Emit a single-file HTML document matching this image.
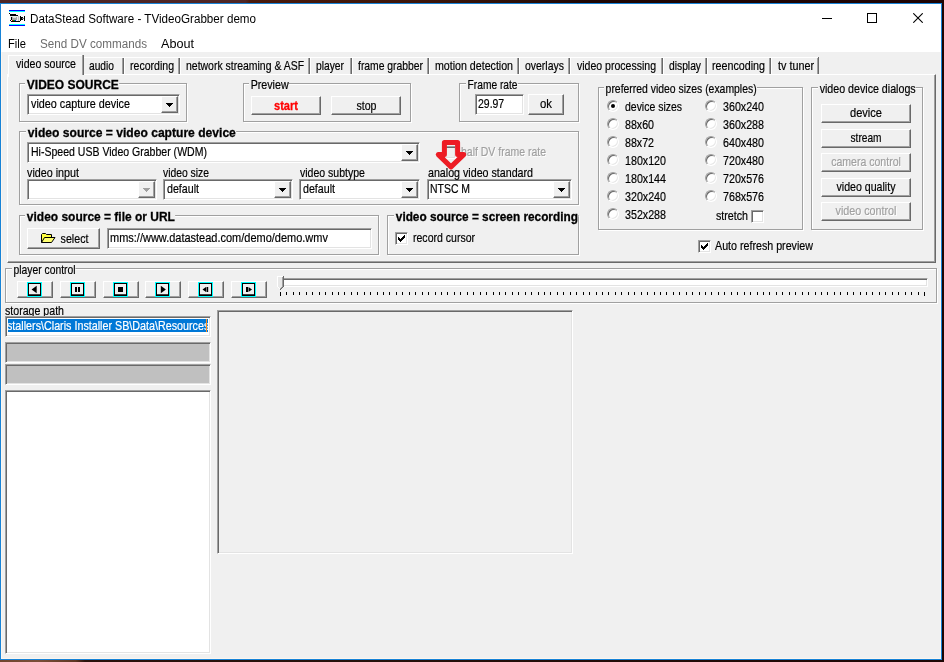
<!DOCTYPE html>
<html>
<head>
<meta charset="utf-8">
<title>DataStead Software - TVideoGrabber demo</title>
<style>
html,body{margin:0;padding:0;}
body{will-change:transform;width:944px;height:662px;position:relative;overflow:hidden;background:#1e0402;font-family:"Liberation Sans",sans-serif;font-size:13px;color:#000;-webkit-text-stroke:0.2px currentColor;}
.a{position:absolute;}
.t{position:absolute;white-space:nowrap;line-height:16px;height:16px;transform-origin:0 0;}
.b{font-weight:bold;-webkit-text-stroke:0.3px currentColor;}
.dis{color:#a0a0a0;text-shadow:1px 1px 0 #fff;}
#win{left:0;top:3px;width:940px;height:655px;border:1px solid #1883d7;background:#f0f0f0;box-shadow:inset 1px 0 #fcf6ef,inset -1px 0 #fcf6ef,inset 0 -1px #fcf6ef;}
#cap{left:1px;top:4px;width:940px;height:48px;background:#fff;}
.seg{font-size:12px;line-height:16px;-webkit-text-stroke:0;}
/* classic 3d borders */
.sunk{position:absolute;box-sizing:border-box;border:1px solid;border-color:#a0a0a0 #fff #fff #a0a0a0;box-shadow:inset 1px 1px 0 #696969,inset -1px -1px 0 #e3e3e3;background:#fff;}
.btn{position:absolute;box-sizing:border-box;border:1px solid;border-color:#fff #696969 #696969 #fff;box-shadow:inset -1px -1px 0 #a0a0a0;background:#f0f0f0;text-align:center;white-space:nowrap;}
.btn span{position:absolute;left:0;right:0;line-height:16px;transform-origin:50% 0;}
.grp{position:absolute;box-sizing:border-box;border:1px solid #a0a0a0;box-shadow:1px 1px 0 #fff,inset 1px 1px 0 #fff;}
.gl{position:absolute;white-space:nowrap;line-height:16px;height:16px;padding:0 0 0 2px;transform-origin:0 0;background:linear-gradient(to bottom,transparent 6px,#f0f0f0 6px,#f0f0f0 8px,transparent 8px);}
.dd{position:absolute;box-sizing:border-box;width:16px;height:15px;border:1px solid;border-color:#fff #696969 #696969 #fff;box-shadow:inset -1px -1px 0 #a0a0a0;background:#f0f0f0;}
.dd i{position:absolute;left:3px;top:5px;width:0;height:0;border-left:4px solid transparent;border-right:4px solid transparent;border-top:4px solid #000;}
.dd.off i{border-top-color:#a0a0a0;}
.rad{position:absolute;box-sizing:border-box;width:12px;height:12px;border-radius:50%;border:1px solid;border-color:#a0a0a0 #fff #fff #a0a0a0;background:#fff;box-shadow:inset 1px 1px 0 #696969,inset -1px -1px 0 #e8e8e8;}
.chk{position:absolute;box-sizing:border-box;width:13px;height:13px;border:1px solid;border-color:#a0a0a0 #fff #fff #a0a0a0;box-shadow:inset 1px 1px 0 #696969,inset -1px -1px 0 #e3e3e3;background:#fff;}
.tabr{position:absolute;top:57px;width:2px;height:17px;background:linear-gradient(90deg,#a0a0a0 0,#a0a0a0 1px,#696969 1px,#696969 2px);}
.pic{position:absolute;box-sizing:border-box;width:14px;height:14px;border:1px solid #00ffff;box-shadow:inset 0 0 0 1px #000;background:#f0f0f0;}
</style>
</head>
<body>
<!-- desktop strips -->
<div class="a" style="left:0;top:0;width:944px;height:3px;background:linear-gradient(90deg,#4f2725 0,#4f2625 26%,#491a0c 26.5%,#3c1509 45%,#2a0e07 56%,#1e0503 62%,#1e0302 100%);"></div>
<div class="a" style="left:0;top:660px;width:944px;height:2px;background:linear-gradient(90deg,#70452f 0,#7a4e38 4%,#5e3724 8%,#2a120c 9%,#24100a 40%,#1e0604 100%);"></div>

<div id="win" class="a"></div>
<div id="cap" class="a"></div>

<!-- title icon -->
<svg class="a" style="left:9px;top:10px;" width="16" height="16" viewBox="0 0 16 16" shape-rendering="crispEdges">
<rect x="0" y="0" width="16" height="1" fill="#0000ff"/><rect x="0" y="1" width="16" height="1" fill="#00ffff"/>
<rect x="0" y="14" width="16" height="1" fill="#00ffff"/><rect x="0" y="15" width="16" height="1" fill="#0000ff"/>
<rect x="0" y="3" width="1" height="1" fill="#000"/><rect x="1" y="4" width="6" height="1" fill="#000"/><rect x="1" y="5" width="8" height="1" fill="#000"/>
<rect x="1" y="6" width="10" height="5" fill="#ececec"/><rect x="3" y="7" width="5" height="3" fill="#a8a8a8"/><rect x="4" y="7" width="3" height="1" fill="#e0e0e0"/>
<rect x="2" y="7" width="1" height="3" fill="#000"/><rect x="9" y="6" width="1" height="5" fill="#c0c0c0"/>
<rect x="1" y="10" width="1" height="1" fill="#000"/><rect x="2" y="10" width="1" height="1" fill="#fff"/><rect x="3" y="10" width="1" height="1" fill="#c00000"/><rect x="4" y="10" width="2" height="1" fill="#00a000"/><rect x="6" y="10" width="1" height="1" fill="#0000ff"/>
<rect x="2" y="11" width="9" height="1" fill="#000"/>
<rect x="11" y="6" width="1" height="5" fill="#000"/><rect x="12" y="7" width="1" height="3" fill="#000"/><rect x="13" y="8" width="2" height="1" fill="#808080"/><rect x="13" y="7" width="1" height="1" fill="#000"/><rect x="13" y="9" width="1" height="1" fill="#000"/>
<rect x="15" y="6" width="1" height="5" fill="#000"/>
</svg>
<!-- caption buttons -->
<div class="a" style="left:822px;top:18px;width:10px;height:1px;background:#000;"></div>
<div class="a" style="left:867px;top:13px;width:8px;height:8px;border:1px solid #000;"></div>
<svg class="a" style="left:913px;top:13px;" width="10" height="10" viewBox="0 0 10 10"><path d="M0.3 0.3 L9.7 9.7 M9.7 0.3 L0.3 9.7" stroke="#000" stroke-width="1.1" fill="none"/></svg>
<div class="t seg" id="title" style="left:30px;top:11px;transform:scaleX(0.97);">DataStead Software - TVideoGrabber demo</div>
<div class="t seg" id="m1" style="left:8px;top:36px;transform:scaleX(0.931);">File</div>
<div class="t seg" id="m2" style="left:40px;top:36px;transform:scaleX(0.972);color:#6d6d6d;">Send DV commands</div>
<div class="t seg" id="m3" style="left:161px;top:36px;transform:scaleX(1.052);">About</div>
<!-- tab control -->
<div class="a" style="left:7px;top:74px;width:927px;height:187px;border:1px solid;border-color:#fff #696969 #696969 #fff;box-shadow:inset -1px -1px 0 #a0a0a0;"></div>
<div class="a" style="left:8px;top:55px;width:74px;height:21px;background:#f0f0f0;border-top:1px solid #fff;border-left:1px solid #fff;"></div>
<div class="tabr" style="left:82px;top:55px;height:20px;"></div>
<div class="tabr" style="left:122px;"></div>
<div class="a" style="left:124px;top:58px;width:1px;height:16px;background:#fff;"></div>
<div class="tabr" style="left:178px;"></div>
<div class="a" style="left:180px;top:58px;width:1px;height:16px;background:#fff;"></div>
<div class="tabr" style="left:308px;"></div>
<div class="a" style="left:310px;top:58px;width:1px;height:16px;background:#fff;"></div>
<div class="tabr" style="left:350px;"></div>
<div class="a" style="left:352px;top:58px;width:1px;height:16px;background:#fff;"></div>
<div class="tabr" style="left:427px;"></div>
<div class="a" style="left:429px;top:58px;width:1px;height:16px;background:#fff;"></div>
<div class="tabr" style="left:517px;"></div>
<div class="a" style="left:519px;top:58px;width:1px;height:16px;background:#fff;"></div>
<div class="tabr" style="left:568px;"></div>
<div class="a" style="left:570px;top:58px;width:1px;height:16px;background:#fff;"></div>
<div class="tabr" style="left:661px;"></div>
<div class="a" style="left:663px;top:58px;width:1px;height:16px;background:#fff;"></div>
<div class="tabr" style="left:705px;"></div>
<div class="a" style="left:707px;top:58px;width:1px;height:16px;background:#fff;"></div>
<div class="tabr" style="left:769px;"></div>
<div class="a" style="left:771px;top:58px;width:1px;height:16px;background:#fff;"></div>
<div class="tabr" style="left:817px;"></div>
<div class="a" style="left:84px;top:57px;width:734px;height:1px;background:#fff;"></div>
<div class="t " id="tab0" style="left:16px;top:56px;transform:scaleX(0.814);">video source</div>
<div class="t " id="tab1" style="left:89px;top:58px;transform:scaleX(0.786);">audio</div>
<div class="t " id="tab2" style="left:130px;top:58px;transform:scaleX(0.812);">recording</div>
<div class="t " id="tab3" style="left:186px;top:58px;transform:scaleX(0.805);">network streaming &amp; ASF</div>
<div class="t " id="tab4" style="left:316px;top:58px;transform:scaleX(0.79);">player</div>
<div class="t " id="tab5" style="left:358px;top:58px;transform:scaleX(0.796);">frame grabber</div>
<div class="t " id="tab6" style="left:435px;top:58px;transform:scaleX(0.818);">motion detection</div>
<div class="t " id="tab7" style="left:525px;top:58px;transform:scaleX(0.805);">overlays</div>
<div class="t " id="tab8" style="left:577px;top:58px;transform:scaleX(0.81);">video processing</div>
<div class="t " id="tab9" style="left:668.5px;top:58px;transform:scaleX(0.791);">display</div>
<div class="t " id="tab10" style="left:712px;top:58px;transform:scaleX(0.824);">reencoding</div>
<div class="t " id="tab11" style="left:777.5px;top:58px;transform:scaleX(0.83);">tv tuner</div>
<!-- groups -->
<div class="grp" style="left:19px;top:83px;width:168px;height:39px;"></div>
<div class="gl b" style="left:25px;top:77px;transform:scaleX(0.923);"><span id="g1">VIDEO SOURCE</span></div>
<div class="grp" style="left:243px;top:83px;width:168px;height:39px;"></div>
<div class="gl" style="left:249px;top:77px;transform:scaleX(0.822);"><span id="g2">Preview</span></div>
<div class="grp" style="left:459px;top:83px;width:120px;height:39px;"></div>
<div class="gl" style="left:466px;top:77px;transform:scaleX(0.786);"><span id="g3">Frame rate</span></div>
<div class="grp" style="left:19px;top:131px;width:560px;height:74px;"></div>
<div class="gl b" style="left:26px;top:125px;transform:scaleX(0.93);"><span id="g4">video source = video capture device</span></div>
<div class="grp" style="left:19px;top:215px;width:360px;height:40px;"></div>
<div class="gl b" style="left:25px;top:209px;transform:scaleX(0.921);"><span id="g5">video source = file or URL</span></div>
<div class="grp" style="left:387px;top:215px;width:192px;height:40px;"></div>
<div class="gl b" style="left:394px;top:209px;transform:scaleX(0.908);"><span id="g6">video source = screen recording</span></div>
<div class="grp" style="left:598px;top:87px;width:205px;height:143px;"></div>
<div class="gl" style="left:604px;top:81px;transform:scaleX(0.801);"><span id="g7">preferred video sizes (examples)</span></div>
<div class="grp" style="left:811px;top:87px;width:112px;height:143px;"></div>
<div class="gl" style="left:818px;top:81px;transform:scaleX(0.82);"><span id="g8">video device dialogs</span></div>
<div class="grp" style="left:5px;top:268px;width:932px;height:35px;"></div>
<div class="gl" style="left:12px;top:262px;transform:scaleX(0.794);"><span id="g9">player control</span></div>
<!-- combos / edits -->
<div class="sunk" style="left:27px;top:94px;width:153px;height:21px;"><div class="dd" style="right:1px;top:1px;width:17px;height:17px;"><svg class="a" style="left:4px;top:6px;" width="7" height="4" viewBox="0 0 7 4" shape-rendering="crispEdges"><path d="M0 0h7v1h-1v1h-1v1h-1v1h-1v-1h-1v-1h-1v-1h-1z" fill="#000"/></svg></div></div>
<div class="t " id="c1" style="left:31px;top:96px;transform:scaleX(0.83);">video capture device</div>
<div class="sunk" style="left:27px;top:142px;width:393px;height:21px;"><div class="dd" style="right:1px;top:1px;width:17px;height:17px;"><svg class="a" style="left:4px;top:6px;" width="7" height="4" viewBox="0 0 7 4" shape-rendering="crispEdges"><path d="M0 0h7v1h-1v1h-1v1h-1v1h-1v-1h-1v-1h-1v-1h-1z" fill="#000"/></svg></div></div>
<div class="t " id="c2" style="left:31px;top:144px;transform:scaleX(0.81);">Hi-Speed USB Video Grabber (WDM)</div>
<div class="sunk" style="left:27px;top:179px;width:130px;height:21px;"><div class="dd" style="right:1px;top:1px;width:17px;height:17px;"><svg class="a" style="left:4px;top:6px;" width="7" height="4" viewBox="0 0 7 4" shape-rendering="crispEdges"><path d="M0 0h7v1h-1v1h-1v1h-1v1h-1v-1h-1v-1h-1v-1h-1z" fill="#a0a0a0"/></svg></div></div>
<div class="sunk" style="left:163px;top:179px;width:130px;height:21px;"><div class="dd" style="right:1px;top:1px;width:17px;height:17px;"><svg class="a" style="left:4px;top:6px;" width="7" height="4" viewBox="0 0 7 4" shape-rendering="crispEdges"><path d="M0 0h7v1h-1v1h-1v1h-1v1h-1v-1h-1v-1h-1v-1h-1z" fill="#000"/></svg></div></div>
<div class="t " id="c3" style="left:167px;top:181px;transform:scaleX(0.82);">default</div>
<div class="sunk" style="left:299px;top:179px;width:121px;height:21px;"><div class="dd" style="right:1px;top:1px;width:17px;height:17px;"><svg class="a" style="left:4px;top:6px;" width="7" height="4" viewBox="0 0 7 4" shape-rendering="crispEdges"><path d="M0 0h7v1h-1v1h-1v1h-1v1h-1v-1h-1v-1h-1v-1h-1z" fill="#000"/></svg></div></div>
<div class="t " id="c4" style="left:303px;top:181px;transform:scaleX(0.82);">default</div>
<div class="sunk" style="left:427px;top:179px;width:145px;height:21px;"><div class="dd" style="right:1px;top:1px;width:17px;height:17px;"><svg class="a" style="left:4px;top:6px;" width="7" height="4" viewBox="0 0 7 4" shape-rendering="crispEdges"><path d="M0 0h7v1h-1v1h-1v1h-1v1h-1v-1h-1v-1h-1v-1h-1z" fill="#000"/></svg></div></div>
<div class="t " id="c5" style="left:430px;top:181px;transform:scaleX(0.803);">NTSC M</div>
<div class="t " id="l1" style="left:27px;top:165px;transform:scaleX(0.827);">video input</div>
<div class="t " id="l2" style="left:163px;top:165px;transform:scaleX(0.796);">video size</div>
<div class="t " id="l3" style="left:300px;top:165px;transform:scaleX(0.81);">video subtype</div>
<div class="t " id="l4" style="left:428px;top:165px;transform:scaleX(0.821);">analog video standard</div>
<div class="sunk" style="left:475px;top:94px;width:49px;height:21px;"></div>
<div class="t " id="e1" style="left:478px;top:96px;transform:scaleX(0.805);">29.97</div>
<div class="sunk" style="left:107px;top:228px;width:265px;height:21px;"></div>
<div class="t " id="e2" style="left:110px;top:230px;transform:scaleX(0.845);">mms://www.datastead.com/demo/demo.wmv</div>
<!-- buttons -->
<div class="btn" style="left:251px;top:96px;width:70px;height:19px;"><span class="b" id="b1" style="top:1px;left:0px;transform:scaleX(0.851);color:#ff0000;">start</span></div>
<div class="btn" style="left:331px;top:96px;width:70px;height:19px;"><span class="" id="b2" style="top:1px;left:1px;transform:scaleX(0.814);">stop</span></div>
<div class="btn" style="left:528px;top:94px;width:36px;height:21px;"><span class="" id="b3" style="top:1px;left:0px;transform:scaleX(0.874);">ok</span></div>
<div class="btn" style="left:27px;top:228px;width:73px;height:21px;"><span class="" id="b4" style="top:2px;left:22px;transform:scaleX(0.82);">select</span></div>
<svg class="a" style="left:41px;top:233px;" width="15" height="10" viewBox="0 0 15 10"><path d="M0.5 9.5V1.5L1.5 0.5H4.5L5.5 1.5H10.5V4.5" fill="#ffff40" stroke="#000"/><path d="M0.5 9.5L3.5 4.5H14L10.5 9.5Z" fill="#ffff70" stroke="#000" stroke-linejoin="round"/></svg>
<div class="btn" style="left:821px;top:104px;width:90px;height:19px;"><span class="" id="b5" style="top:0px;left:0px;transform:scaleX(0.852);">device</span></div>
<div class="btn" style="left:821px;top:129px;width:90px;height:19px;"><span class="" id="b6" style="top:0px;left:0px;transform:scaleX(0.78);">stream</span></div>
<div class="btn" style="left:821px;top:153px;width:90px;height:19px;"><span class="dis" id="b7" style="top:0px;left:0px;transform:scaleX(0.811);">camera control</span></div>
<div class="btn" style="left:821px;top:178px;width:90px;height:19px;"><span class="" id="b8" style="top:0px;left:0px;transform:scaleX(0.816);">video quality</span></div>
<div class="btn" style="left:821px;top:202px;width:90px;height:19px;"><span class="dis" id="b9" style="top:0px;left:0px;transform:scaleX(0.827);">video control</span></div>
<!-- radios -->
<div class="rad" style="left:607px;top:100px;"><i class="a" style="left:3px;top:3px;width:4px;height:4px;background:#000;border-radius:50%;"></i></div>
<div class="t " id="r0" style="left:624.5px;top:99px;transform:scaleX(0.805);">device sizes</div>
<div class="rad" style="left:607px;top:118px;"></div>
<div class="t " id="r1" style="left:624.5px;top:117px;transform:scaleX(0.819);">88x60</div>
<div class="rad" style="left:607px;top:136px;"></div>
<div class="t " id="r2" style="left:624.5px;top:135px;transform:scaleX(0.819);">88x72</div>
<div class="rad" style="left:607px;top:154px;"></div>
<div class="t " id="r3" style="left:624.5px;top:153px;transform:scaleX(0.822);">180x120</div>
<div class="rad" style="left:607px;top:172px;"></div>
<div class="t " id="r4" style="left:624.5px;top:171px;transform:scaleX(0.822);">180x144</div>
<div class="rad" style="left:607px;top:190px;"></div>
<div class="t " id="r5" style="left:624.5px;top:189px;transform:scaleX(0.822);">320x240</div>
<div class="rad" style="left:607px;top:208px;"></div>
<div class="t " id="r6" style="left:624.5px;top:207px;transform:scaleX(0.822);">352x288</div>
<div class="rad" style="left:705px;top:100px;"></div>
<div class="t " id="q0" style="left:722.6px;top:99px;transform:scaleX(0.822);">360x240</div>
<div class="rad" style="left:705px;top:118px;"></div>
<div class="t " id="q1" style="left:722.6px;top:117px;transform:scaleX(0.822);">360x288</div>
<div class="rad" style="left:705px;top:136px;"></div>
<div class="t " id="q2" style="left:722.6px;top:135px;transform:scaleX(0.822);">640x480</div>
<div class="rad" style="left:705px;top:154px;"></div>
<div class="t " id="q3" style="left:722.6px;top:153px;transform:scaleX(0.822);">720x480</div>
<div class="rad" style="left:705px;top:172px;"></div>
<div class="t " id="q4" style="left:722.6px;top:171px;transform:scaleX(0.822);">720x576</div>
<div class="rad" style="left:705px;top:190px;"></div>
<div class="t " id="q5" style="left:722.6px;top:189px;transform:scaleX(0.822);">768x576</div>
<div class="t " id="st" style="left:715.6px;top:208px;transform:scaleX(0.82);">stretch</div>
<div class="chk" style="left:751px;top:210px;"></div>
<div class="chk" style="left:395px;top:232px;"><svg class="a" style="left:2px;top:2px;" width="7" height="7" viewBox="0 0 7 7" shape-rendering="crispEdges"><path d="M0 2h1v3h-1zM1 3h1v3h-1zM2 4h1v3h-1zM3 3h1v3h-1zM4 2h1v3h-1zM5 1h1v3h-1zM6 0h1v3h-1z" fill="#000"/></svg></div>
<div class="t " id="k1" style="left:413px;top:230px;transform:scaleX(0.81);">record cursor</div>
<div class="chk" style="left:698px;top:240px;"><svg class="a" style="left:2px;top:2px;" width="7" height="7" viewBox="0 0 7 7" shape-rendering="crispEdges"><path d="M0 2h1v3h-1zM1 3h1v3h-1zM2 4h1v3h-1zM3 3h1v3h-1zM4 2h1v3h-1zM5 1h1v3h-1zM6 0h1v3h-1z" fill="#000"/></svg></div>
<div class="t " id="k2" style="left:715px;top:238px;transform:scaleX(0.822);">Auto refresh preview</div>
<div class="chk" style="left:443px;top:146px;background:#f0f0f0;"></div>
<div class="t dis" id="hd" style="left:461px;top:144px;transform:scaleX(0.806);">half DV frame rate</div>
<svg class="a" style="left:430px;top:136px;" width="42" height="36" viewBox="0 0 42 36"><path d="M14.4 6.4 H27.6 V18.6 H33.7 L21 30.9 L8.3 18.6 H14.4 Z" fill="none" stroke="#ed1c24" stroke-width="5" stroke-linejoin="round"/></svg>
<!-- player -->
<div class="btn" style="left:17px;top:281px;width:36px;height:17px;"><svg class="a" style="left:9px;top:0px;" width="15" height="15" viewBox="0 0 15 15"><rect x="0.5" y="0.5" width="14" height="14" fill="#f0f0f0" stroke="#00ffff" shape-rendering="crispEdges"/><rect x="1.5" y="1.5" width="12" height="12" fill="none" stroke="#000" shape-rendering="crispEdges"/><rect x="2" y="12" width="11" height="1" fill="#404040" shape-rendering="crispEdges"/><path d="M9.7 3.7v7.6L4.6 7.5z"/></svg></div>
<div class="btn" style="left:60px;top:281px;width:36px;height:17px;"><svg class="a" style="left:9px;top:0px;" width="15" height="15" viewBox="0 0 15 15"><rect x="0.5" y="0.5" width="14" height="14" fill="#f0f0f0" stroke="#00ffff" shape-rendering="crispEdges"/><rect x="1.5" y="1.5" width="12" height="12" fill="none" stroke="#000" shape-rendering="crispEdges"/><rect x="2" y="12" width="11" height="1" fill="#404040" shape-rendering="crispEdges"/><path d="M5 5h2v5H5zM8 5h2v5H8z"/></svg></div>
<div class="btn" style="left:103px;top:281px;width:36px;height:17px;"><svg class="a" style="left:9px;top:0px;" width="15" height="15" viewBox="0 0 15 15"><rect x="0.5" y="0.5" width="14" height="14" fill="#f0f0f0" stroke="#00ffff" shape-rendering="crispEdges"/><rect x="1.5" y="1.5" width="12" height="12" fill="none" stroke="#000" shape-rendering="crispEdges"/><rect x="2" y="12" width="11" height="1" fill="#404040" shape-rendering="crispEdges"/><path d="M5 5h5v5H5z"/></svg></div>
<div class="btn" style="left:145px;top:281px;width:36px;height:17px;"><svg class="a" style="left:9px;top:0px;" width="15" height="15" viewBox="0 0 15 15"><rect x="0.5" y="0.5" width="14" height="14" fill="#f0f0f0" stroke="#00ffff" shape-rendering="crispEdges"/><rect x="1.5" y="1.5" width="12" height="12" fill="none" stroke="#000" shape-rendering="crispEdges"/><rect x="2" y="12" width="11" height="1" fill="#404040" shape-rendering="crispEdges"/><path d="M5.8 3.7v7.6l5.1-3.8z"/></svg></div>
<div class="btn" style="left:188px;top:281px;width:36px;height:17px;"><svg class="a" style="left:9px;top:0px;" width="15" height="15" viewBox="0 0 15 15"><rect x="0.5" y="0.5" width="14" height="14" fill="#f0f0f0" stroke="#00ffff" shape-rendering="crispEdges"/><rect x="1.5" y="1.5" width="12" height="12" fill="none" stroke="#000" shape-rendering="crispEdges"/><rect x="2" y="12" width="11" height="1" fill="#404040" shape-rendering="crispEdges"/><path d="M8 5v5L4.5 7.5z"/><path d="M8.5 5h1.7v5H8.5z"/></svg></div>
<div class="btn" style="left:231px;top:281px;width:36px;height:17px;"><svg class="a" style="left:9px;top:0px;" width="15" height="15" viewBox="0 0 15 15"><rect x="0.5" y="0.5" width="14" height="14" fill="#f0f0f0" stroke="#00ffff" shape-rendering="crispEdges"/><rect x="1.5" y="1.5" width="12" height="12" fill="none" stroke="#000" shape-rendering="crispEdges"/><rect x="2" y="12" width="11" height="1" fill="#404040" shape-rendering="crispEdges"/><path d="M7.5 5v5L11 7.5z"/><path d="M5 5h2v5H5z"/></svg></div>
<div class="a" style="left:281px;top:278px;width:647px;height:9px;box-sizing:border-box;border:1px solid;border-color:#a0a0a0 #fff #fff #a0a0a0;box-shadow:inset 1px 1px 0 #696969,inset -1px -1px 0 #e3e3e3;background:#fff;"></div>
<svg class="a" style="left:280px;top:292px;" width="646" height="4" viewBox="0 0 646 4" shape-rendering="crispEdges" fill="#000"><rect x="0" y="0" width="1" height="4"/><rect x="6" y="0" width="1" height="3"/><rect x="13" y="0" width="1" height="3"/><rect x="19" y="0" width="1" height="3"/><rect x="26" y="0" width="1" height="3"/><rect x="32" y="0" width="1" height="3"/><rect x="39" y="0" width="1" height="3"/><rect x="45" y="0" width="1" height="3"/><rect x="52" y="0" width="1" height="3"/><rect x="58" y="0" width="1" height="3"/><rect x="64" y="0" width="1" height="3"/><rect x="71" y="0" width="1" height="3"/><rect x="77" y="0" width="1" height="3"/><rect x="84" y="0" width="1" height="3"/><rect x="90" y="0" width="1" height="3"/><rect x="97" y="0" width="1" height="3"/><rect x="103" y="0" width="1" height="3"/><rect x="109" y="0" width="1" height="3"/><rect x="116" y="0" width="1" height="3"/><rect x="122" y="0" width="1" height="3"/><rect x="129" y="0" width="1" height="3"/><rect x="135" y="0" width="1" height="3"/><rect x="142" y="0" width="1" height="3"/><rect x="148" y="0" width="1" height="3"/><rect x="155" y="0" width="1" height="3"/><rect x="161" y="0" width="1" height="3"/><rect x="167" y="0" width="1" height="3"/><rect x="174" y="0" width="1" height="3"/><rect x="180" y="0" width="1" height="3"/><rect x="187" y="0" width="1" height="3"/><rect x="193" y="0" width="1" height="3"/><rect x="200" y="0" width="1" height="3"/><rect x="206" y="0" width="1" height="3"/><rect x="213" y="0" width="1" height="3"/><rect x="219" y="0" width="1" height="3"/><rect x="225" y="0" width="1" height="3"/><rect x="232" y="0" width="1" height="3"/><rect x="238" y="0" width="1" height="3"/><rect x="245" y="0" width="1" height="3"/><rect x="251" y="0" width="1" height="3"/><rect x="258" y="0" width="1" height="3"/><rect x="264" y="0" width="1" height="3"/><rect x="270" y="0" width="1" height="3"/><rect x="277" y="0" width="1" height="3"/><rect x="283" y="0" width="1" height="3"/><rect x="290" y="0" width="1" height="3"/><rect x="296" y="0" width="1" height="3"/><rect x="303" y="0" width="1" height="3"/><rect x="309" y="0" width="1" height="3"/><rect x="316" y="0" width="1" height="3"/><rect x="322" y="0" width="1" height="3"/><rect x="328" y="0" width="1" height="3"/><rect x="335" y="0" width="1" height="3"/><rect x="341" y="0" width="1" height="3"/><rect x="348" y="0" width="1" height="3"/><rect x="354" y="0" width="1" height="3"/><rect x="361" y="0" width="1" height="3"/><rect x="367" y="0" width="1" height="3"/><rect x="374" y="0" width="1" height="3"/><rect x="380" y="0" width="1" height="3"/><rect x="386" y="0" width="1" height="3"/><rect x="393" y="0" width="1" height="3"/><rect x="399" y="0" width="1" height="3"/><rect x="406" y="0" width="1" height="3"/><rect x="412" y="0" width="1" height="3"/><rect x="419" y="0" width="1" height="3"/><rect x="425" y="0" width="1" height="3"/><rect x="431" y="0" width="1" height="3"/><rect x="438" y="0" width="1" height="3"/><rect x="444" y="0" width="1" height="3"/><rect x="451" y="0" width="1" height="3"/><rect x="457" y="0" width="1" height="3"/><rect x="464" y="0" width="1" height="3"/><rect x="470" y="0" width="1" height="3"/><rect x="477" y="0" width="1" height="3"/><rect x="483" y="0" width="1" height="3"/><rect x="489" y="0" width="1" height="3"/><rect x="496" y="0" width="1" height="3"/><rect x="502" y="0" width="1" height="3"/><rect x="509" y="0" width="1" height="3"/><rect x="515" y="0" width="1" height="3"/><rect x="522" y="0" width="1" height="3"/><rect x="528" y="0" width="1" height="3"/><rect x="535" y="0" width="1" height="3"/><rect x="541" y="0" width="1" height="3"/><rect x="547" y="0" width="1" height="3"/><rect x="554" y="0" width="1" height="3"/><rect x="560" y="0" width="1" height="3"/><rect x="567" y="0" width="1" height="3"/><rect x="573" y="0" width="1" height="3"/><rect x="580" y="0" width="1" height="3"/><rect x="586" y="0" width="1" height="3"/><rect x="592" y="0" width="1" height="3"/><rect x="599" y="0" width="1" height="3"/><rect x="605" y="0" width="1" height="3"/><rect x="612" y="0" width="1" height="3"/><rect x="618" y="0" width="1" height="3"/><rect x="625" y="0" width="1" height="3"/><rect x="631" y="0" width="1" height="3"/><rect x="638" y="0" width="1" height="3"/><rect x="644" y="0" width="1" height="4"/></svg>
<svg class="a" style="left:277px;top:276px;" width="7" height="15" viewBox="0 0 7 15" shape-rendering="crispEdges"><path d="M0 0h6v11l-3 3L0 11z" fill="#e8e8e8"/><rect x="0" y="0" width="6" height="1" fill="#fff"/><rect x="0" y="0" width="1" height="11" fill="#fff"/><rect x="1" y="11" width="1" height="1" fill="#fff"/><rect x="2" y="12" width="1" height="1" fill="#fff"/><rect x="6" y="0" width="1" height="11" fill="#696969"/><rect x="5" y="1" width="1" height="10" fill="#a0a0a0"/><rect x="5" y="11" width="1" height="1" fill="#696969"/><rect x="4" y="12" width="1" height="1" fill="#696969"/><rect x="3" y="13" width="1" height="1" fill="#696969"/><rect x="4" y="11" width="1" height="1" fill="#a0a0a0"/><rect x="3" y="12" width="1" height="1" fill="#a0a0a0"/></svg>
<!-- lower -->
<div class="t " id="sp" style="left:5px;top:303px;transform:scaleX(0.816);">storage path</div>
<div class="sunk" style="left:5px;top:316px;width:206px;height:21px;"></div>
<div class="a" style="left:8px;top:319px;width:200px;height:13px;background:#0078d7;overflow:hidden;"><i class="a" style="left:198px;top:0;width:1px;height:13px;background:#ff8c1a;z-index:2;"></i><div class="t" id="path" style="left:-1px;top:-1px;color:#fff;transform:scaleX(0.826);">stallers\Claris Installer SB\Data\Resources</div></div>
<div class="sunk" style="left:5px;top:342px;width:206px;height:21px;background:#c0c0c0;"></div>
<div class="sunk" style="left:5px;top:364px;width:206px;height:21px;background:#c0c0c0;"></div>
<div class="sunk" style="left:5px;top:390px;width:206px;height:264px;"></div>
<div class="a" style="left:217px;top:310px;width:354px;height:242px;border:1px solid;border-color:#a0a0a0 #fff #fff #a0a0a0;box-shadow:inset 1px 1px 0 #696969,inset -1px -1px 0 #e3e3e3;"></div>
</body>
</html>
